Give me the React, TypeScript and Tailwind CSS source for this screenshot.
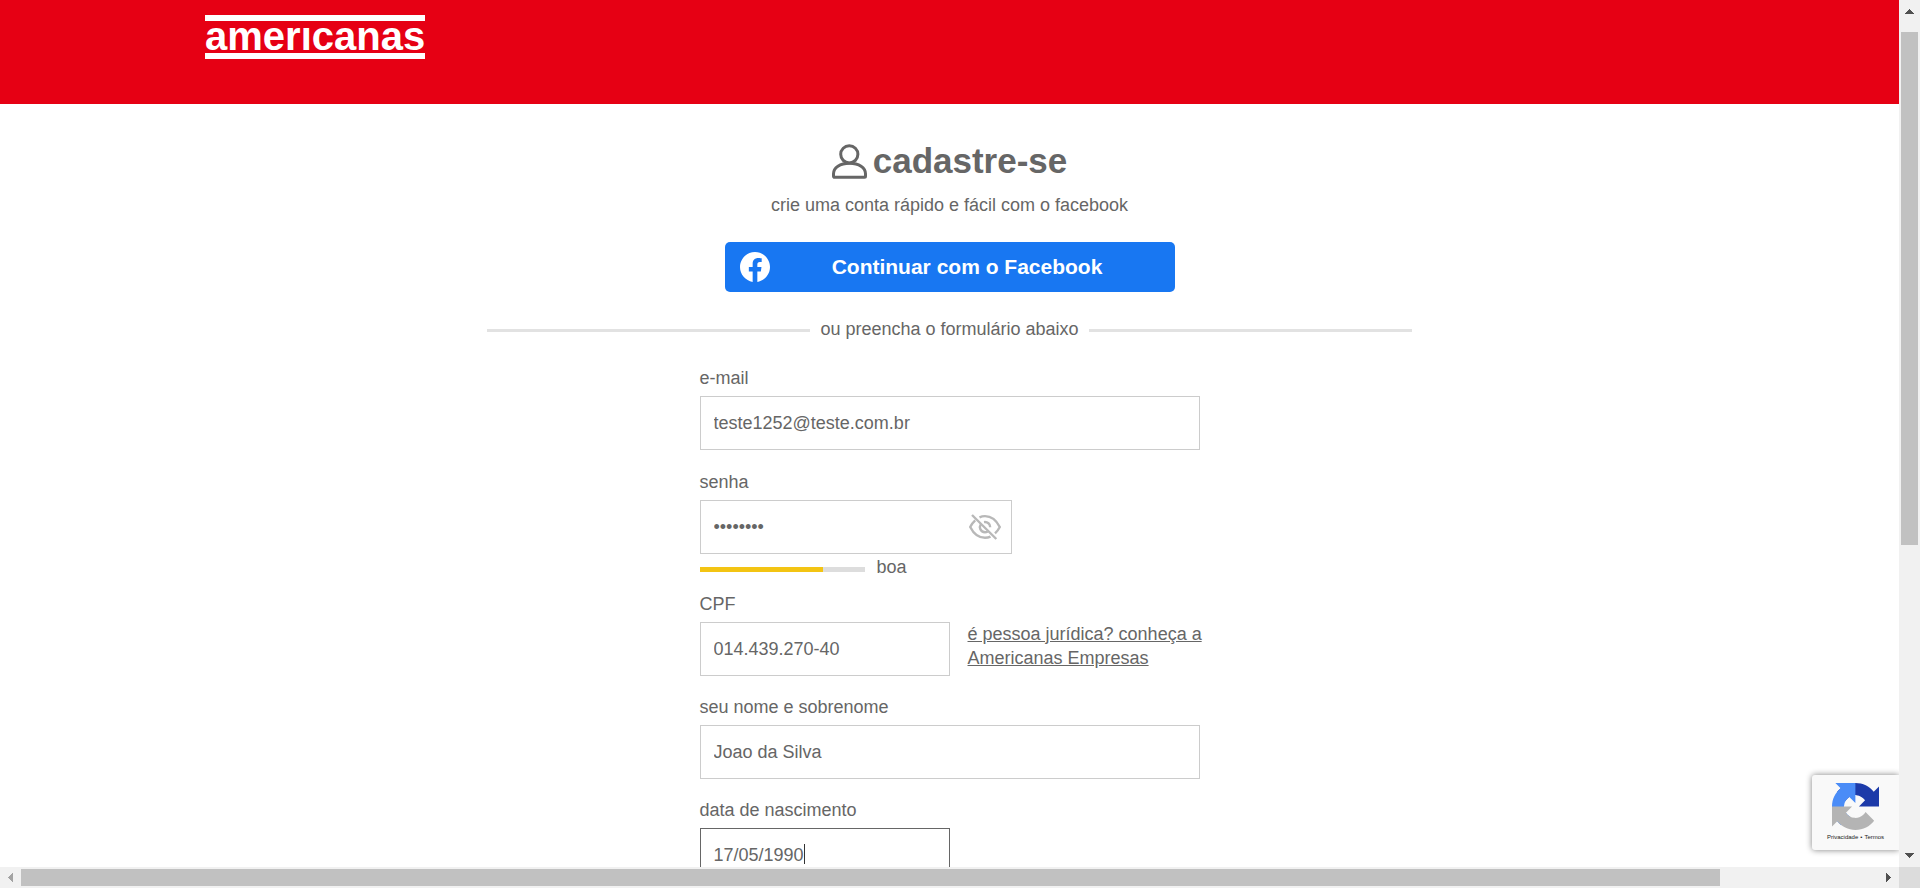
import React, { useId, useState } from "react";

const inputBase =
  "h-[54px] w-full rounded-none border bg-white px-[13px] text-lg text-[#666] outline-none";

function Logo() {
  return (
    <a href="#" className="flex w-[220px] flex-col pt-[15px] text-white">
      <span className="relative z-10 h-1.5 bg-white" />
      <span className="relative z-10 h-1 bg-[#e60014]" />
      <span className="h-7 text-center text-[40px] leading-[22px] font-bold whitespace-nowrap">americanas</span>
      <span className="h-1.5 bg-white" />
    </a>
  );
}

function UserIcon() {
  return (
    <svg viewBox="0 0 35 35" className="size-[35px]" fill="none" stroke="#666" strokeWidth="3">
      <circle cx="17.3" cy="10.3" r="8.6" />
      <path d="M2 33.3c-.3-.2-.5-.6-.5-1v-2.500C1.500 23.500 8 19.200 17.500 19.200s16 4.300 16 10.600v2.500c0 .6-.5 1-1 1h-30z" />
    </svg>
  );
}

function FacebookIcon() {
  return (
    <svg viewBox="0 0 24 24" className="size-[30px] shrink-0" fill="#fff">
      <path d="M24 12.073C24 5.446 18.627.073 12 .073S0 5.446 0 12.073c0 5.990 4.388 10.954 10.125 11.854v-8.385H7.078v-3.470h3.047V9.430c0-3.007 1.792-4.669 4.533-4.669 1.312 0 2.686.235 2.686.235v2.953H15.830c-1.491 0-1.956.925-1.956 1.874v2.250h3.328l-.532 3.470h-2.796v8.385C19.612 23.027 24 18.062 24 12.073z" />
    </svg>
  );
}

function EyeOffIcon() {
  return (
    <svg viewBox="0 0 32 26" className="h-[26px] w-8" fill="none" stroke="#b8b8b8" strokeWidth="2.4">
      <path d="M10.500 3.300C12.200 2.500 14 2.100 16 2.100c6.500 0 11.500 4.400 14.800 10.900-1.300 2.500-2.900 4.700-4.800 6.400" />
      <path d="M21.500 22.600c-1.700.8-3.500 1.200-5.500 1.200C9.500 23.800 4.500 19.500 1.200 13 2.500 10.400 4.200 8.200 6.200 6.400" />
      <path d="M15 8.100c3.600-.5 6.200 1.900 6.200 5.100" />
      <path d="M12 9.800c-2.300 3.500-.7 8.400 4 8.400 1 0 1.900-.3 2.700-.8" />
      <path d="M3 1l24.300 24" />
    </svg>
  );
}

function RecaptchaIcon() {
  return (
    <svg viewBox="0 0 64 64" className="size-[47px]">
      <path fill="#1c3aa9" d="M64 31.955l-.016-1.370V4.687l-7.160 7.160C50.964 4.674 42.033.093 32.050.093c-10.390 0-19.622 4.960-25.460 12.640l11.736 11.860a15.550 15.550 0 0 1 4.754-5.334c2.050-1.600 4.952-2.906 8.968-2.906.485 0 .860.057 1.135.163 4.976.393 9.288 3.140 11.828 7.124l-8.307 8.307L64 31.953" />
      <path fill="#4a8cf7" d="M31.862.094l-1.370.016H4.594l7.160 7.160C4.580 13.147 0 22.080 0 32.046c0 10.390 4.960 19.622 12.640 25.460L24.500 45.770a15.550 15.550 0 0 1-5.334-4.754c-1.600-2.050-2.906-4.952-2.906-8.968 0-.485.057-.860.163-1.135.393-4.976 3.140-9.288 7.124-11.828l8.307 8.307L31.860.095" />
      <path fill="#b4b4b4" d="M.001 32.045l.016 1.370v25.898l7.160-7.160c5.860 7.173 14.774 11.754 24.760 11.754 10.390 0 19.622-4.960 25.460-12.640l-11.736-11.860a15.550 15.550 0 0 1-4.754 5.334c-2.050 1.600-4.952 2.906-8.968 2.906-.485 0-.860-.057-1.135-.163-4.976-.393-9.288-3.140-11.828-7.124l8.307-8.307-27.282.001" />
    </svg>
  );
}

type FieldProps = {
  label: string;
  initial: string;
  type?: string;
  width?: string;
  active?: boolean;
  overlay?: React.ReactNode;
  aside?: React.ReactNode;
};

function Field({ label, initial, type = "text", width = "w-full", active, overlay, aside }: FieldProps) {
  const id = useId();
  const [value, setValue] = useState(initial);
  return (
    <div className="flex flex-col gap-1.5">
      <label htmlFor={id}>{label}</label>
      <div className="flex gap-[18px]">
        <div className={`relative shrink-0 ${width}`}>
          <input
            id={id}
            type={type}
            value={value}
            onChange={(e) => setValue(e.target.value)}
            className={`${inputBase} ${active ? "border-[#666]" : "border-[#ccc]"}`}
          />
          {overlay}
        </div>
        {aside}
      </div>
    </div>
  );
}

function Arrow({ points, color }: { points: string; color: string }) {
  return (
    <svg viewBox="0 0 21 21" className="size-[21px] shrink-0" shapeRendering="crispEdges">
      <polygon points={points} fill={color} />
    </svg>
  );
}

export default function App() {
  return (
    <div className="flex h-screen flex-col overflow-hidden bg-white font-['Liberation_Sans',Arial,sans-serif] text-lg leading-6 text-[#666]">
      <div className="flex min-h-0 flex-1">
        <div className="relative min-w-0 flex-1 overflow-hidden">
          <header className="h-[104px] bg-[#e60014]">
            <div className="mx-auto max-w-[1489px]">
              <Logo />
            </div>
          </header>

          <main className="flex flex-col items-center pt-9">
            <h1 className="flex items-center gap-1.5 text-[35px] leading-[42px] font-bold">
              <UserIcon />
              cadastre-se
            </h1>
            <p className="mt-[11px]">crie uma conta rápido e fácil com o facebook</p>
            <button
              type="button"
              className="mt-[25px] flex h-[50px] w-full max-w-[450px] items-center rounded-[5px] bg-[#1877f2] pr-2.5 pl-[15px] text-[21px] font-bold text-white"
            >
              <FacebookIcon />
              <span className="flex-1 text-center">Continuar com o Facebook</span>
            </button>

            <div className="mt-[25px] flex w-full max-w-[925px] items-center gap-2.5">
              <span className="mt-[3px] h-[3px] flex-1 bg-[#e2e2e2]" />
              <span>ou preencha o formulário abaixo</span>
              <span className="mt-[3px] h-[3px] flex-1 bg-[#e2e2e2]" />
            </div>

            <form className="mt-[25px] flex w-full max-w-[500px] flex-col gap-[19px]">
              <Field label="e-mail" initial="teste1252@teste.com.br" type="email" />
              <div className="-mb-1.5 pt-px">
                <Field
                  label="senha"
                  initial="abcd1234"
                  type="password"
                  width="w-[312px]"
                  overlay={
                    <button type="button" aria-label="mostrar senha" className="absolute top-3.5 right-[11px]">
                      <EyeOffIcon />
                    </button>
                  }
                />
                <div className="flex items-center gap-3 pt-px">
                  <div className="mt-[5px] h-[5px] w-[165px] bg-[#ddd]">
                    <div className="h-full w-3/4 bg-[#f3c413]" />
                  </div>
                  <span>boa</span>
                </div>
              </div>
              <Field
                label="CPF"
                initial="014.439.270-40"
                width="w-[250px]"
                aside={
                  <a href="#" className="whitespace-nowrap underline">
                    é pessoa jurídica? conheça a
                    <br />
                    Americanas Empresas
                  </a>
                }
              />
              <Field label="seu nome e sobrenome" initial="Joao da Silva" />
              <Field
                label="data de nascimento"
                initial="17/05/1990"
                width="w-[250px]"
                active
                overlay={<span className="absolute top-4 left-[104px] h-5 w-px bg-[#333]" />}
              />
            </form>
          </main>

          <aside className="absolute right-0 bottom-[17px] flex h-[75px] w-[87px] flex-col items-center rounded-l-[3px] bg-[#f9f9f9] pt-2 text-[#222] shadow-[0_0_6px_#808080]">
            <RecaptchaIcon />
            <p className="mt-0.5 flex gap-0.5 text-[6px] leading-[10px] whitespace-nowrap">
              <a href="#">Privacidade</a>
              <span>•</span>
              <a href="#">Termos</a>
            </p>
          </aside>
        </div>

        <div className="flex w-[21px] shrink-0 flex-col bg-[#f1f1f1]">
          <Arrow points="6,14 15,14 10.5,9" color="#505050" />
          <div className="flex flex-1 flex-col px-0.5 pt-[11px]">
            <div className="h-[63%] bg-[#c1c1c1]" />
          </div>
          <Arrow points="6,7 15,7 10.5,12" color="#505050" />
        </div>
      </div>

      <div className="flex h-[21px] shrink-0 bg-[#f1f1f1]">
        <Arrow points="13,6 13,15 8,10.5" color="#a3a3a3" />
        <div className="flex flex-1 py-0.5">
          <div className="w-[91.5%] bg-[#c1c1c1]" />
        </div>
        <Arrow points="8,6 8,15 13,10.5" color="#505050" />
        <div className="w-[21px] bg-[#dcdcdc]" />
      </div>
    </div>
  );
}
